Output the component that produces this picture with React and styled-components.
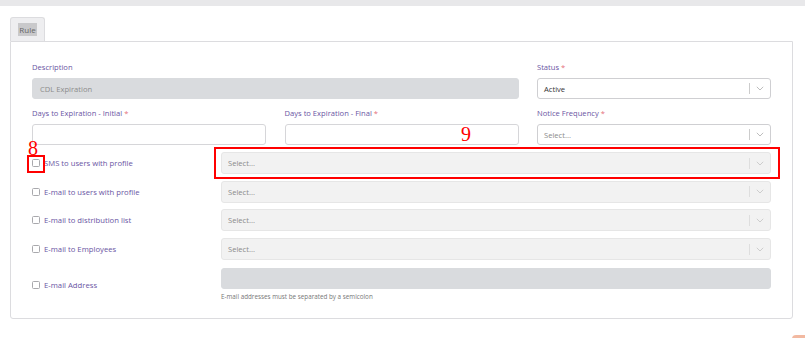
import styled, { createGlobalStyle } from "styled-components";

const GlobalStyle = createGlobalStyle`
  body {
    margin: 0;
    background: #ffffff;
    font-family: "Open Sans", "Liberation Sans", sans-serif;
  }
`;

const Page = styled.div`
  position: relative;
  width: 805px;
  height: 338px;
  overflow: hidden;
  background: #fff;
`;

const TopBar = styled.div`
  height: 6px;
  background: #e8e8ea;
`;

const Content = styled.div`
  padding: 11px 12px 0 10px;
`;

const Tabs = styled.div`
  display: flex;
`;

const Tab = styled.div`
  width: 35px;
  height: 24px;
  box-sizing: border-box;
  border: 1px solid #dcdcdf;
  border-bottom: none;
  border-radius: 3px 3px 0 0;
  background: #eeeef0;
  display: flex;
  align-items: center;
  justify-content: center;
`;

const TabText = styled.span`
  font-size: 8px;
  color: #666;
  background: #c9c9cb;
  padding: 2px 1px;
  line-height: 9px;
`;

const Panel = styled.div`
  border: 1px solid #dcdcdf;
  border-radius: 0 0 3px 3px;
  padding: 19px 21px 17px 21px;
  height: 278px;
  box-sizing: border-box;
`;

const Grid = styled.div`
  display: grid;
  grid-template-columns: 234px 234px 234px;
  column-gap: 18.5px;
  row-gap: 8px;
`;

const Field = styled.div`
  grid-column: span ${({ $span }) => $span || 1};
  display: flex;
  flex-direction: column;
`;

const Label = styled.label`
  font-size: 7.6px;
  color: #6a55a3;
  line-height: 13px;
  margin-bottom: 4px;
`;

const Star = styled.span`
  color: #e5707a;
`;

const Input = styled.div`
  height: 21px;
  box-sizing: border-box;
  border-radius: 3px;
  border: 1px solid ${({ $disabled }) => ($disabled ? "#d9dbde" : "#d6d6d9")};
  background: ${({ $disabled }) => ($disabled ? "#d9dbde" : "#fff")};
  font-size: 7.6px;
  color: #8c8c8c;
  display: flex;
  align-items: center;
  padding-left: 7px;
`;

const SelectBox = styled.div`
  height: ${({ $h }) => $h || 21}px;
  box-sizing: border-box;
  border-radius: 3px;
  border: 1px solid ${({ $muted }) => ($muted ? "#e6e6e6" : "#cfcfd2")};
  background: ${({ $muted }) => ($muted ? "#f2f2f2" : "#fff")};
  display: flex;
  align-items: center;
  flex: 1;
`;

const SelectValue = styled.span`
  flex: 1;
  font-size: 7.6px;
  padding-left: 6px;
  color: ${({ $placeholder }) => ($placeholder ? "#8a8a8a" : "#333")};
`;

const Separator = styled.span`
  width: 1px;
  height: 11px;
  background: ${({ $muted }) => ($muted ? "#dedede" : "#ccc")};
`;

const Chevron = styled.span`
  width: 20px;
  display: flex;
  justify-content: center;
  align-items: center;
`;

const Options = styled.div`
  margin-top: 7px;
  display: flex;
  flex-direction: column;
  gap: 6.7px;
`;

const OptionRow = styled.div`
  display: flex;
  align-items: ${({ $top }) => ($top ? "flex-start" : "center")};
  margin-top: ${({ $top }) => ($top ? "1px" : "0")};
`;

const CheckLabel = styled.div`
  width: 189px;
  display: flex;
  align-items: center;
  gap: 4px;
  font-size: 7.7px;
  color: #6a55a3;
  padding-top: ${({ $top }) => ($top ? "12px" : "0")};
`;

const Box = styled.span`
  width: 6px;
  height: 6px;
  border: 1px solid #a9a9ad;
  border-radius: 1.5px;
  background: #fff;
`;

const AddressCol = styled.div`
  flex: 1;
  display: flex;
  flex-direction: column;
`;

const Help = styled.div`
  font-size: 6.3px;
  color: #777;
  margin-top: 3px;
`;

const Mark = styled.div`
  position: absolute;
  border: 2px solid #f00;
  box-sizing: border-box;
`;

const Num = styled.div`
  position: absolute;
  color: #f00;
  font-family: "Liberation Serif", serif;
  font-size: 20px;
  line-height: 20px;
`;

const Dot = styled.div`
  position: absolute;
  left: 792px;
  top: 335px;
  width: 16px;
  height: 8px;
  border-radius: 8px;
  background: #f2b9a1;
`;

const ChevronIcon = ({ muted }) => (
  <svg width="8" height="5" viewBox="0 0 8 5">
    <path d="M0.8 0.8 L4 4 L7.2 0.8" fill="none" stroke={muted ? "#c8c8c8" : "#b5b5b5"} strokeWidth="0.9" />
  </svg>
);

const Select = ({ value, placeholder, muted, h }) => (
  <SelectBox $muted={muted} $h={h}>
    <SelectValue $placeholder={placeholder}>{value}</SelectValue>
    <Separator $muted={muted} />
    <Chevron>
      <ChevronIcon muted={muted} />
    </Chevron>
  </SelectBox>
);

const options = [
  "SMS to users with profile",
  "E-mail to users with profile",
  "E-mail to distribution list",
  "E-mail to Employees",
];

export default function App() {
  return (
    <Page>
      <GlobalStyle />
      <TopBar />
      <Content>
        <Tabs>
          <Tab>
            <TabText>Rule</TabText>
          </Tab>
        </Tabs>
        <Panel>
          <Grid>
            <Field $span={2}>
              <Label>Description</Label>
              <Input $disabled>CDL Expiration</Input>
            </Field>
            <Field>
              <Label>
                Status <Star>*</Star>
              </Label>
              <Select value="Active" />
            </Field>
            <Field>
              <Label>
                Days to Expiration - Initial <Star>*</Star>
              </Label>
              <Input />
            </Field>
            <Field>
              <Label>
                Days to Expiration - Final <Star>*</Star>
              </Label>
              <Input />
            </Field>
            <Field>
              <Label>
                Notice Frequency <Star>*</Star>
              </Label>
              <Select value="Select..." placeholder />
            </Field>
          </Grid>
          <Options>
            {options.map((o) => (
              <OptionRow key={o}>
                <CheckLabel>
                  <Box />
                  {o}
                </CheckLabel>
                <Select value="Select..." placeholder muted h={22} />
              </OptionRow>
            ))}
            <OptionRow $top>
              <CheckLabel $top>
                <Box />
                E-mail Address
              </CheckLabel>
              <AddressCol>
                <Input $disabled />
                <Help>E-mail addresses must be separated by a semicolon</Help>
              </AddressCol>
            </OptionRow>
          </Options>
        </Panel>
      </Content>
      <Mark style={{ left: 214, top: 147, width: 566, height: 32 }} />
      <Mark style={{ left: 27, top: 155, width: 18, height: 18 }} />
      <Num style={{ left: 28, top: 138 }}>8</Num>
      <Num style={{ left: 461, top: 124 }}>9</Num>
      <Dot />
    </Page>
  );
}
